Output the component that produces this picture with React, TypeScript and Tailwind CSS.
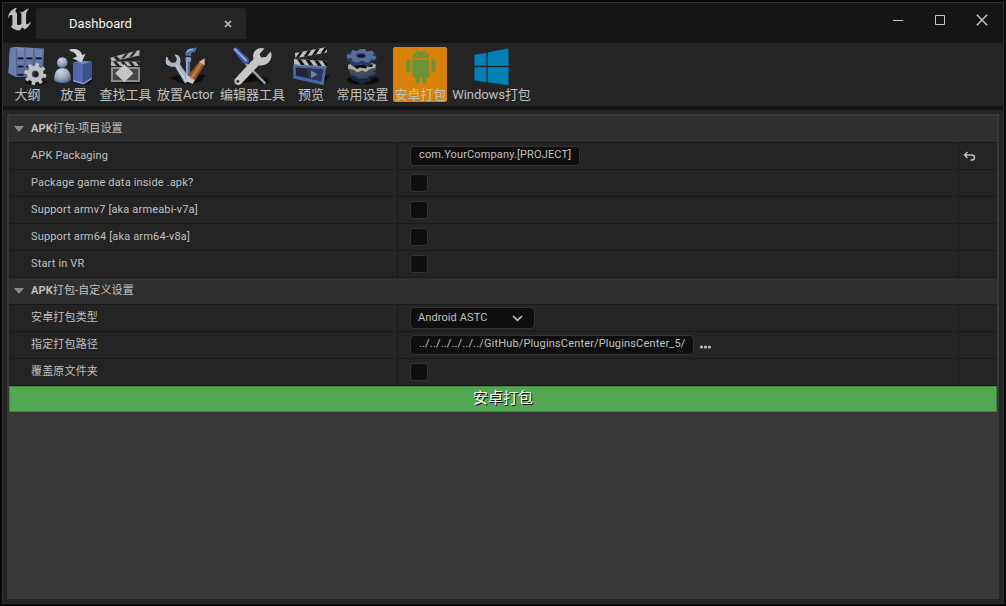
import type { ReactNode } from "react";

function gearPath(cx: number, cy: number, outer: number, inner: number, teeth: number, squash = 1) {
  const points: string[] = [];
  const step = (Math.PI * 2) / teeth;
  for (let i = 0; i < teeth; i++) {
    const a = i * step + 0.2;
    const offsets: [number, number][] = [
      [-0.3, inner],
      [-0.2, outer],
      [0.2, outer],
      [0.3, inner],
    ];
    for (const [o, r] of offsets) {
      const t = a + o * step;
      points.push(`${(cx + Math.cos(t) * r).toFixed(2)} ${(cy + Math.sin(t) * r * squash).toFixed(2)}`);
    }
  }
  return `M${points.join("L")}Z`;
}

function IconFrame({ children }: { children: ReactNode }) {
  return (
    <svg width="40" height="40" viewBox="0 0 40 40" className="block shrink-0 overflow-visible">
      {children}
    </svg>
  );
}

function OutlinerIcon() {
  return (
    <IconFrame>
      <defs>
        <linearGradient id="cabinet" x1="0" y1="0" x2="1" y2="1">
          <stop offset="0" stopColor="#8797c0" />
          <stop offset="1" stopColor="#4c5b88" />
        </linearGradient>
      </defs>
      <ellipse cx="29" cy="35" rx="11" ry="3" fill="#0c0c0c" />
      <path d="M3 1L9 0L37 1.500L36 30L9 30L1.500 26Z" fill="url(#cabinet)" />
      <path d="M3 1L9 0L9 30L1.500 26Z" fill="#6b7cae" />
      <path d="M10.500 3H17V10H10.500ZM19 3H26V10H19ZM28 3.500H35V10H28Z" fill="#7182b2" />
      <path d="M10.500 12.500H17V18.500H10.500ZM19 12.500H26V18.500H19ZM28 12.500H35V18.500H28Z" fill="#6576a6" />
      <path d="M10.500 21H17V27H10.500ZM19 21H26V27H19Z" fill="#5b6b9b" />
      <path d="M10.500 11.300H16.500M19.500 11.300H25.500M28.500 11.300H34.500M10.500 19.700H16.500M19.500 19.700H24.500M10.500 27.800H16.500" stroke="#0c1122" strokeWidth="1.800" />
      <path d="M9.700 1V29M18 1V29M27 1V18" stroke="#46547f" strokeWidth=".8" />
      <path d={gearPath(28.3, 27, 11.2, 8.2, 8)} fill="#c0c0c0" />
      <circle cx="28.300" cy="27" r="3.500" fill="#46485a" />
      <circle cx="29" cy="27.500" r="2.400" fill="#1d1e25" />
    </IconFrame>
  );
}

function PlaceIcon() {
  return (
    <IconFrame>
      <defs>
        <radialGradient id="person" cx=".4" cy=".25" r=".8">
          <stop offset="0" stopColor="#d0d8e0" />
          <stop offset=".55" stopColor="#99a9bc" />
          <stop offset="1" stopColor="#4f6490" />
        </radialGradient>
      </defs>
      <path d="M20 36L35 38L40 33L39 28Z" fill="#0c0c0c" />
      <path d="M1.300 33C1 25 4 21 9.500 21S18 25 17.700 33C15 37 4 37 1.300 33Z" fill="url(#person)" />
      <circle cx="9.300" cy="15.500" r="5.300" fill="url(#person)" />
      <path d="M20 16L30.500 17.500V37L20 33.500Z" fill="#5268ab" />
      <path d="M30.500 17.500L39 14.500V31L30.500 37Z" fill="#3d5190" />
      <path d="M20 16L27 13.500L39 14.500L30.500 17.500Z" fill="#6b80b9" />
      <path d="M20 33L30.500 35.800L39 30.500V32L30.500 37.500L20 34.500Z" fill="#8d9cc7" />
      <path d="M16.800 2.500C23 1.200 27.500 3 29.300 8L32.500 6.700L28.500 15.500L19.500 11.300L23.800 9.800C23 6.500 20.500 4.500 16.800 4Z" fill="#d0d0d0" />
    </IconFrame>
  );
}

function FindToolIcon() {
  return (
    <IconFrame>
      <path d="M34 33L37 34L34 37L8 36Z" fill="#111111" />
      <path d="M5.500 10.500L34.500 3V8.500L6.500 14.500Z" fill="#b4b4b4" />
      <path d="M8 9.800L11.500 9L15.500 12.600L12 13.400ZM15.800 11.900L20.500 6.600L24 5.700L19.300 11.100ZM24 10.200L28.700 4.500L32 3.700L27.500 9.400Z" fill="#252525" />
      <path d="M6 14.500H35V19H6Z" fill="#b4b4b4" />
      <path d="M8 14.500L11.500 19H15L11.500 14.500ZM15.500 14.500L19 19H22.500L19 14.500ZM23 14.500L26.500 19H30L26.500 14.500ZM30.500 14.500L34 19H35V15.500L34 14.500Z" fill="#252525" />
      <path d="M6 20H35V35H6Z" fill="#8b8b8b" />
      <path d="M8 22H33V33H8Z" fill="#454545" />
      <path d="M19.300 17.300L28.500 26.300L19.300 35.300L10.100 26.300Z" fill="#c3c3c3" />
    </IconFrame>
  );
}

function PlaceActorIcon() {
  return (
    <IconFrame>
      <path d="M4 31L18 27L40 28L37 34L28 37H19Z" fill="#0d0d0d" />
      <path d="M21.200 10H25.300L25 31H21Z" fill="#4d7199" />
      <path d="M21.200 10H22.700L22.500 30H21Z" fill="#9fb8d2" />
      <path d="M20.500 8.500C20 4 22.500 1.500 27 1.300C29 1.300 30.500 .5 31.500 .2C31.500 4.500 29 5.200 26.500 5.800L25.800 9Z" fill="#4a70a8" />
      <path d="M22 5C23.500 3 25 2.500 28 2.200" stroke="#a3bfdc" strokeWidth="1.200" fill="none" />
      <path d="M20.500 10.500H26V14.500H20.500Z" fill="#879cb8" />
      <path d="M2 9.500C.5 12.500 1 17 3.500 18.500C5.800 20 8 20 10 19.500L20 36.500L25.500 33L14.800 17C16.500 13.500 15.500 10 12.500 8L9.500 7.500L12 12L10.500 15.500L6.500 15.800L3.500 13Z" fill="#a8b9ca" />
      <path d="M2 10C.8 13 1 17 3.500 18.500M11 18L21 34" stroke="#d1dbe4" strokeWidth="1" fill="none" />
      <path d="M34 15L39.500 11.500L39.500 18L28 36.500L20 32Z" fill="#8f5424" />
      <path d="M35 16L37 17.300L26 34.500L23.500 33Z" fill="#bd7e45" />
      <path d="M34 15L39.500 11.500L39.500 18L37 16.700Z" fill="#d8c4a6" />
      <path d="M22.500 28L29.800 33L27.500 37L19.500 33.500Z" fill="#c6cace" />
      <path d="M24 29.500L28.500 32.500" stroke="#8e949a" strokeWidth="1" />
    </IconFrame>
  );
}

function EditorToolIcon() {
  return (
    <IconFrame>
      <path d="M2 30L14 26L35 31L38 35L30 37L25 34L10 36Z" fill="#0d0d0d" />
      <path d="M14 15L34 35.500L32.500 37.500L12.500 17Z" fill="#8fa4b8" />
      <path d="M.8 2.500C1 .8 3 0 4.500 .6L15.700 10.500C17.500 12.500 17.300 15 16 16.500C14 17.700 12.300 17.200 10.500 15.500Z" fill="#3b55a4" />
      <path d="M3 2.300L14 13.500" stroke="#8fa5dc" strokeWidth="2.200" strokeLinecap="round" />
      <path d="M29 1C23 2 20 6 21.500 12L2.800 32C.8 36 5 40 9 37L26.500 18.500C33.500 19.500 40 15 39.500 7L38.500 4.500L34 10L29 10.500L27.500 7L32.500 1.500Z" fill="#c6c6c6" />
      <circle cx="5.800" cy="34.300" r="1.500" fill="#343434" />
    </IconFrame>
  );
}

function PreviewIcon() {
  return (
    <IconFrame>
      <path d="M31 27L39 29L36 33L32 35Z" fill="#0c0c0c" />
      <path d="M4 6L36 0V5.500L4.500 11.300Z" fill="#c3c3c3" />
      <path d="M8.500 5.200L12 4.500L8 10.600L4.500 11.300ZM16.500 3.700L20.500 2.900L16.500 9.100L12.500 9.800ZM25 2.100L29 1.300L25 7.500L21 8.300ZM33.500 .5L36 0V2L33 6L29.500 6.700Z" fill="#141414" />
      <path d="M3 12L36 14V19.500L3 17.500Z" fill="#b8bec4" />
      <path d="M6 12.200L10 12.500L14 18.200L10 17.900ZM14.500 12.700L18.500 13L22.500 18.700L18.500 18.500ZM23 13.200L27 13.500L31 19.200L27 19ZM31 13.700L35 14L36 15.500V19.500L35 19.500Z" fill="#141414" />
      <path d="M2 18L35.500 20L32.500 38.300L2.300 31.500Z" fill="#4865a0" />
      <path d="M5 20.500L32 22.500L30 34L5 28.500Z" fill="#1f2536" />
      <path d="M15 21.200L32 22.500L30 34L18 31.400Z" fill="#2c3650" />
      <path d="M20 23.300L26.700 27.500L20 31.300Z" fill="#6585c2" />
      <path d="M2.500 18L35.500 20" stroke="#8398bf" strokeWidth=".8" />
    </IconFrame>
  );
}

function SettingsIcon() {
  return (
    <IconFrame>
      <ellipse cx="21" cy="33" rx="16" ry="4.500" fill="#0b0b0b" />
      <path d="M8 25L13 23.500H28L34 25V30L29 31.500L28 35H24L22 37H18L16 34.500L11 33.500L8 30Z" fill="#1b243b" />
      <path d="M8 25L13 23.500H28L34 25L33 28L27 29L25 31.500H16L14 29.500L9 28.500Z" fill="#34456b" />
      <path d="M6 18L11 16H30L34 18V23L30 25L27 28L22 27L18 30L14 27L9 26L6 23Z" fill="#4d4d4d" />
      <path d="M6 18L11 16H30L34 18L33 21L28 22L24 25L20 23.500L15 25.500L12 23L6 21.500Z" fill="#a9a9a9" />
      <path d="M9 17.500L31 17.500L30 20L25 19.500L24 21.500L18 20.500L15 22L12 19.500Z" fill="#0c0d12" />
      <path d="M5 5L4.500 13.500L8.500 15L9.500 18.500L15 19L17 17.500L22 18L25 19.500L29.500 17.500L29.500 14.500L34.500 12.500L34 7Z" fill="#293a60" />
      <path d="M10 3L15 4L18 2L23 2L25 4.500L30 3.500L32.500 6L30 8L34.500 10L33 12.500L28.500 12.500L28 15L23.500 15.500L20 13.500L15.500 15.500L10.500 14.500L10 11.500L5 11L4.500 8L9 7Z" fill="#576c9b" />
      <ellipse cx="19" cy="8.500" rx="4.700" ry="2.300" fill="#26324e" />
      <ellipse cx="19.500" cy="9" rx="3.500" ry="1.500" fill="#111727" />
    </IconFrame>
  );
}

function AndroidIcon() {
  return (
    <IconFrame>
      <g fill="#6c9436">
        <path d="M12.300 11C12.300 7 16 4.200 20.800 4.200S29.300 7 29.300 11Z" />
        <path d="M15.500 2L18 6M26 2L23.500 6" stroke="#6c9436" strokeWidth=".8" />
        <path d="M12.300 12.500H29.300V28.500Q29.300 30.500 27.300 30.500H14.300Q12.300 30.500 12.300 28.500Z" />
        <rect x="6.200" y="12.300" width="4.300" height="13" rx="2.100" />
        <rect x="31.200" y="12.300" width="4.300" height="13" rx="2.100" />
        <rect x="15.300" y="27" width="4.200" height="9.500" rx="2" />
        <rect x="22.100" y="27" width="4.200" height="9.500" rx="2" />
      </g>
      <circle cx="17" cy="8" r=".8" fill="#d8820c" />
      <circle cx="24.500" cy="8" r=".8" fill="#d8820c" />
    </IconFrame>
  );
}

function WindowsIcon() {
  return (
    <IconFrame>
      <path d="M3.500 7.800L15.400 6.100V18.700H3.500ZM16.700 5.500L37.500 1.200V18.700H16.700ZM3.500 20.200H15.400V35.200L3.500 33.200ZM16.700 20.200H37.500V38.300L16.700 35.300Z" fill="#0080b4" />
    </IconFrame>
  );
}

const tools = [
  { label: "大纲", width: "w-[42px]", icon: <OutlinerIcon /> },
  { label: "放置", width: "w-[42px]", icon: <PlaceIcon /> },
  { label: "查找工具", width: "w-[54px]", icon: <FindToolIcon /> },
  { label: "放置Actor", width: "w-[58px]", icon: <PlaceActorIcon /> },
  { label: "编辑器工具", width: "w-[68px]", icon: <EditorToolIcon /> },
  { label: "预览", width: "w-[41px]", icon: <PreviewIcon /> },
  { label: "常用设置", width: "w-[54px]", icon: <SettingsIcon /> },
  { label: "安卓打包", width: "w-[54px]", icon: <AndroidIcon />, active: true },
  { label: "Windows打包", width: "w-[80px]", icon: <WindowsIcon /> },
];

function TitleBar() {
  return (
    <header className="flex h-10 shrink-0 items-start bg-[#151515]">
      <svg width="23" height="23" viewBox="4.65 5.35 14.5 14.1" className="mt-[5px] ml-[5px] shrink-0">
        <path
          fill="#c0c0c0"
          d="M19.130 13.729c-.206.997-1.126 3.557-4.060 4.942l-1.179-1.325-1.988 2a7.338 7.338 0 0 1-5.804-2.978 2.859 2.859 0 0 0 .650.123c.326.006.678-.114.678-.660v-5.394a.890.890 0 0 0-1.116-.890c-.920.212-1.656 2.509-1.656 2.509a7.304 7.304 0 0 1 2.528-5.597 7.408 7.408 0 0 1 3.730-1.721c-1.006.573-1.570 1.507-1.570 2.290 0 1.262.760 1.109.984.923v7.280a1.157 1.157 0 0 0 .148.256 1.075 1.075 0 0 0 .880.445c.760 0 1.747-.868 1.747-.868V9.172c0-.600-.452-1.324-.905-1.572 0 0 .838-.149 1.484.346a5.537 5.537 0 0 1 .387-.425c1.508-1.480 2.929-1.902 4.112-2.112 0 0-2.151 1.690-2.151 3.960 0 1.687.043 5.801.043 5.801.799.771 1.986-.342 3.059-1.441Z"
        />
      </svg>
      <div className="mt-[5px] ml-[5px] flex h-[31px] w-[210px] items-center justify-between rounded-t bg-[#242424] pr-[14px] pl-[33px]">
        <span className="text-[13px] leading-none text-[#f2f2f2]">Dashboard</span>
        <svg width="8" height="8" viewBox="0 0 8 8">
          <path d="M1 1L7 7M7 1L1 7" stroke="#c0c0c0" strokeWidth="1.700" />
        </svg>
      </div>
      <div className="mt-[11px] mr-[15px] ml-auto flex gap-[30px] text-[#c8c8c8]">
        <svg width="12" height="12" viewBox="0 0 12 12">
          <path d="M1 6.500H11" stroke="currentColor" />
        </svg>
        <svg width="12" height="12" viewBox="0 0 12 12">
          <path d="M1.500 1.500H10.500V10.500H1.500Z" fill="none" stroke="currentColor" />
        </svg>
        <svg width="12" height="12" viewBox="0 0 12 12">
          <path d="M.8 .8L11.200 11.200M11.200 .8L.8 11.200" stroke="currentColor" strokeWidth="1.400" />
        </svg>
      </div>
    </header>
  );
}

function Toolbar() {
  return (
    <nav className="flex h-[63px] shrink-0 gap-1 bg-[#242424] pt-1 pl-[3px]">
      {tools.map((tool) => (
        <button
          key={tool.label}
          className={`flex h-[55px] shrink-0 flex-col items-center rounded-[2px] ${tool.width} ${tool.active ? "bg-[#d8820c]" : ""}`}
        >
          {tool.icon}
          <span className="pl-px text-[13px] leading-[15px] tracking-[-0.05px] whitespace-nowrap text-[#c0c0c0]">
            {tool.label}
          </span>
        </button>
      ))}
    </nav>
  );
}

function SectionHeader({ title }: { title: string }) {
  return (
    <div className="flex h-[27px] items-center border-b border-[#1a1a1a] bg-[#2f2f2f] pb-px pl-[5px]">
      <svg width="10" height="6" viewBox="0 0 10 6" className="mt-px">
        <path d="M0 0H10L5 6Z" fill="#8a8a8a" />
      </svg>
      <span className="ml-[7px] text-[11px] leading-none tracking-[0.12px] text-[#c0c0c0]">
        <b>APK</b>
        {title}
      </span>
    </div>
  );
}

function Row({ label, action, children }: { label: string; action?: ReactNode; children: ReactNode }) {
  return (
    <div className="flex h-[27px] border-b border-[#1a1a1a] bg-[#242424]">
      <div className="flex w-[389px] items-center border-r border-[#1a1a1a] pb-px pl-[22px] text-[11px] leading-none tracking-[0.16px]">
        {label}
      </div>
      <div className="flex flex-1 items-center pl-3">{children}</div>
      <div className="flex w-[39px] items-center border-l border-[#1a1a1a] pl-1">{action}</div>
    </div>
  );
}

function Checkbox() {
  return <span role="checkbox" aria-checked="false" className="mb-px size-[18px] rounded-[3px] border border-[#333333] bg-[#0f0f0f]" />;
}

export default function App() {
  return (
    <div className="flex h-[606px] w-[1006px] bg-[#080808] p-[2px] font-[Roboto,'Noto_Sans_CJK_SC',sans-serif] text-[#c0c0c0]">
      <div className="flex flex-1 flex-col border border-[#303030] bg-[#242424]">
        <TitleBar />
        <Toolbar />
        <div className="h-1 shrink-0 bg-[#151515]" />
        <main className="mx-1 mt-1 mb-1 flex-1 border-2 border-[#383838] bg-[#383838]">
          <SectionHeader title="打包-项目设置" />
          <Row
            label="APK Packaging"
            action={
              <svg width="13" height="11" viewBox="0 0 13 11" className="mt-px">
                <path d="M4.500 1L1.500 4L4.500 7M1.500 4H9A2.500 2.500 0 0 1 9 9H7.500" fill="none" stroke="#c0c0c0" strokeWidth="1.400" />
              </svg>
            }
          >
            <div className="flex h-5 w-[170px] items-center rounded border border-[#333333] bg-[#0f0f0f] pb-[3px] pl-2 text-[11px] leading-none tracking-[0.14px]">
              com.YourCompany.[PROJECT]
            </div>
          </Row>
          <Row label="Package game data inside .apk?">
            <Checkbox />
          </Row>
          <Row label="Support armv7 [aka armeabi-v7a]">
            <Checkbox />
          </Row>
          <Row label="Support arm64 [aka arm64-v8a]">
            <Checkbox />
          </Row>
          <Row label="Start in VR">
            <Checkbox />
          </Row>
          <SectionHeader title="打包-自定义设置" />
          <Row label="安卓打包类型">
            <div className="flex h-[22px] w-[125px] items-center justify-between rounded border border-[#333333] bg-[#0f0f0f] pr-[11px] pl-[7px] text-[11px] leading-none tracking-[0.1px]">
              <span className="pb-[2px]">Android ASTC</span>
              <svg width="11" height="7" viewBox="0 0 11 7">
                <path d="M1 1L5.500 5.300L10 1" fill="none" stroke="#c0c0c0" strokeWidth="1.600" />
              </svg>
            </div>
          </Row>
          <Row label="指定打包路径">
            <div className="flex h-5 w-[284px] items-center rounded border border-[#333333] bg-[#0f0f0f] pb-[3px] pl-2 text-[11px] leading-none tracking-[0.16px]">
              ../../../../../../GitHub/PluginsCenter/PluginsCenter_5/
            </div>
            <svg width="12" height="4" viewBox="0 0 12 4" className="mt-1 ml-[5px]">
              <circle cx="2.500" cy="2" r="1.600" fill="#c0c0c0" />
              <circle cx="6.500" cy="2" r="1.600" fill="#c0c0c0" />
              <circle cx="10.400" cy="2" r="1.600" fill="#c0c0c0" />
            </svg>
          </Row>
          <Row label="覆盖原文件夹">
            <Checkbox />
          </Row>
          <button className="flex h-[26px] w-full items-center justify-center border border-[#3f8440] bg-[#53a753] pb-[2px] text-[15px] leading-none text-white [text-shadow:1px_1px_0_#111]">
            安卓打包
          </button>
        </main>
      </div>
    </div>
  );
}
